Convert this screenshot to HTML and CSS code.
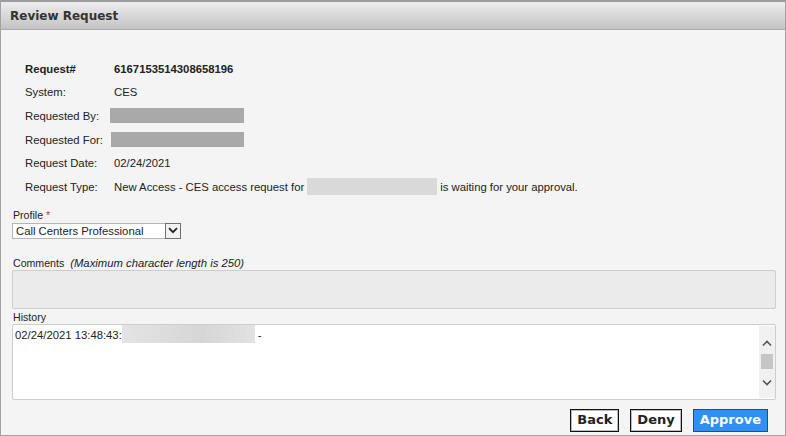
FILE: index.html
```html
<!DOCTYPE html>
<html>
<head>
<meta charset="utf-8">
<link rel="stylesheet" href="styles.css">
</head>
<body>
<div class="frame">
  <div class="header">Review Request</div>
  <div class="content">
    <div class="details">
      <div class="row strong"><span class="lbl">Request#</span><span class="val">6167153514308658196</span></div>
      <div class="row"><span class="lbl">System:</span><span class="val">CES</span></div>
      <div class="row"><span class="lbl">Requested By:</span><span class="redact dark by"></span></div>
      <div class="row"><span class="lbl">Requested For:</span><span class="redact dark for"></span></div>
      <div class="row"><span class="lbl">Request Date:</span><span class="val">02/24/2021</span></div>
      <div class="row"><span class="lbl">Request Type:</span><span class="val">New Access - CES access request for</span><span class="redact light type"></span><span class="after">is waiting for your approval.</span></div>
    </div>
    <div class="field profile">
      <div class="flabel">Profile <span class="req">*</span></div>
      <div class="select">
        <span class="sel-text">Call Centers Professional</span>
        <span class="sel-btn"><svg width="10" height="7" viewBox="0 0 10 7"><path d="M1 1.2 L5 5.2 L9 1.2" fill="none" stroke="#222" stroke-width="1.8"/></svg></span>
      </div>
    </div>
    <div class="field comments">
      <div class="flabel">Comments <em class="hint">(Maximum character length is 250)</em></div>
      <div class="comment-box"></div>
    </div>
    <div class="field history">
      <div class="flabel">History</div>
      <div class="history-box">
        <div class="history-text"><span>02/24/2021 13:48:43:</span><span class="redact hist"></span><span class="dash">-</span></div>
        <div class="scrollbar">
          <svg class="arrow" width="10" height="7" viewBox="0 0 10 7"><path d="M1 5.5 L5 1.5 L9 5.5" fill="none" stroke="#555" stroke-width="1.6"/></svg>
          <div class="track"><div class="thumb"></div></div>
          <svg class="arrow" width="10" height="7" viewBox="0 0 10 7"><path d="M1 1.5 L5 5.5 L9 1.5" fill="none" stroke="#555" stroke-width="1.6"/></svg>
        </div>
      </div>
    </div>
    <div class="actions">
      <button class="btn">Back</button>
      <button class="btn">Deny</button>
      <button class="btn primary">Approve</button>
    </div>
  </div>
</div>
</body>
</html>
```
FILE: styles.css
```css
* { box-sizing: border-box; }
html, body { margin: 0; padding: 0; background: #f4f4f4; }
body { font-family: "Liberation Sans", Arial, sans-serif; font-size: 11.3px; color: #222; }

.frame {
  width: 786px;
  height: 436px;
  border: 1px solid #a3a3a3;
  border-top: none;
  background: #f4f4f4;
  display: flex;
  flex-direction: column;
}

.header {
  height: 30px;
  border-top: 2px solid #9c9c9c;
  border-bottom: 1px solid #a9a9a9;
  background: linear-gradient(#ededed, #c3c3c3);
  font-family: "DejaVu Sans", Verdana, sans-serif;
  font-weight: bold;
  font-size: 12px;
  color: #333;
  padding: 7px 0 0 9px;
}

.content {
  flex: 1;
  padding: 0 9px 0 11px;
  display: flex;
  flex-direction: column;
}

.details {
  padding: 27px 0 0 13px;
  display: flex;
  flex-direction: column;
}

.row {
  height: 23.6px;
  display: flex;
  align-items: center;
  white-space: nowrap;
}
.row.strong { font-weight: bold; }
.lbl { width: 89px; flex: none; }
.redact { display: inline-block; flex: none; }
.redact.dark { background: #a9a9a9; height: 15px; }
.redact.by { width: 134px; margin-left: -4px; }
.redact.for { width: 133px; margin-left: -3px; }
.redact.light { background: #d9d9d9; height: 17px; }
.redact.type { width: 130px; margin-left: 3px; }
.after { margin-left: 3px; }

.field { display: flex; flex-direction: column; }
.flabel { font-size: 10.6px; line-height: 13px; padding-left: 1px; }
.req { color: #d03030; }
.hint { margin-left: 3px; font-size: 11.3px; }

.profile { margin-top: 10px; }
.select {
  margin-top: 1px;
  width: 169px;
  height: 16px;
  background: #fff;
  border: 1px solid #b5b5b5;
  display: flex;
  align-items: center;
  padding-left: 3px;
}
.sel-text { flex: 1; }
.sel-btn {
  width: 16px;
  height: 16px;
  margin-right: -1px;
  border: 1px solid #707070;
  background: #f2f2f2;
  display: flex;
  align-items: center;
  justify-content: center;
}

.comments { margin-top: 18px; }
.comment-box {
  margin-top: 0;
  height: 39px;
  background: #ebebeb;
  border: 1px solid #cdcdcd;
  border-radius: 2px;
}

.history { margin-top: 2px; }
.history-box {
  margin-top: 0;
  height: 76px;
  background: #fff;
  border: 1px solid #cdcdcd;
  border-radius: 2px;
  display: flex;
}
.history-text {
  flex: 1;
  padding: 2px 0 0 2px;
  display: flex;
  align-items: flex-start;
  height: 22px;
}
.history-text > span:first-child { line-height: 16px; }
.redact.hist {
  width: 133px;
  height: 18px;
  margin-top: -2px;
  background: linear-gradient(90deg, #e4e4e4, #d6d6d6 60%, #e2e2e2);
}
.dash { margin-left: 3px; line-height: 16px; }

.scrollbar {
  width: 16px;
  margin: 1px 0 1px 0;
  background: #f1f1f1;
  display: flex;
  flex-direction: column;
  align-items: center;
  padding: 14px 0 12px;
}
.arrow { flex: none; }
.track { flex: 1; width: 100%; padding-top: 7px; }
.thumb { width: 12px; height: 15px; margin: 0 auto; background: #c6c6c6; }

.actions {
  margin-top: 9px;
  display: flex;
  justify-content: flex-end;
  gap: 11px;
  padding-right: 8px;
}
.btn {
  font-family: "DejaVu Sans", Verdana, sans-serif;
  font-weight: bold;
  font-size: 13px;
  color: #222;
  background: #fff;
  border: 1px solid #111;
  box-shadow: inset 0 0 0 1px #bbb;
  height: 23px;
  padding: 0 6px;
  margin: 0;
  line-height: 20px;
}
.btn.primary {
  background: #2f8ff2;
  color: #fff;
  border-color: #1a4f8a;
  box-shadow: none;
  padding: 0 6px;
}
```
